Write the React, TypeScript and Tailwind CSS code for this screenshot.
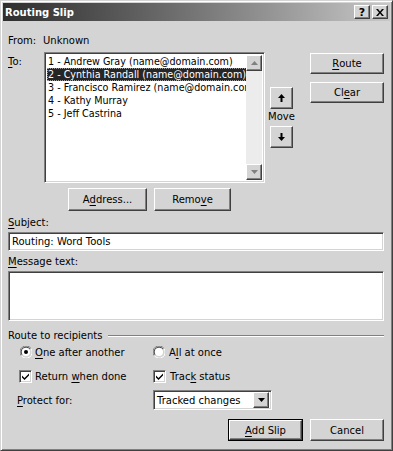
import React from "react";

const raised =
  "border border-t-white border-l-white border-r-[#404040] border-b-[#404040] shadow-[inset_-1px_-1px_0_#808080] bg-[#d4d4d4]";
const sunken =
  "border border-t-[#808080] border-l-[#808080] border-r-white border-b-white shadow-[inset_1px_1px_0_#404040,inset_-1px_-1px_0_#d4d4d4]";

const U = ({ children }: { children: React.ReactNode }) => (
  <span className="underline underline-offset-[2px]">{children}</span>
);

const Button = ({
  children,
  className = "",
  isDefault = false,
}: {
  children: React.ReactNode;
  className?: string;
  isDefault?: boolean;
}) => {
  if (isDefault) {
    return (
      <div className={`border border-black flex ${className}`}>
        <div className={`${raised} flex-1 flex items-center justify-center`}>{children}</div>
      </div>
    );
  }
  return <div className={`${raised} flex items-center justify-center ${className}`}>{children}</div>;
};

const Arrow = ({ up }: { up: boolean }) => (
  <svg width="7" height="8" viewBox="0 0 7 8" className={up ? "" : "rotate-180"}>
    <path d="M3.5 0 L7 4 L4.5 4 L4.5 8 L2.5 8 L2.5 4 L0 4 Z" fill="#000" />
  </svg>
);

const ScrollArrow = ({ up }: { up: boolean }) => (
  <div className={`${raised} w-[16px] h-[16px] flex items-center justify-center`}>
    <svg width="7" height="4" viewBox="0 0 7 4" className={up ? "" : "rotate-180"}>
      <path d="M3.5 0 L7 4 L0 4 Z" fill="#808080" />
    </svg>
  </div>
);

const Radio = ({ checked }: { checked: boolean }) => (
  <svg width="12" height="12" viewBox="0 0 12 12">
    <path d="M11 2.5 A5.5 5.5 0 0 0 1 9.5" stroke="#808080" fill="none" />
    <path d="M10 3.2 A4.5 4.5 0 0 0 2 8.8" stroke="#404040" fill="none" />
    <circle cx="6" cy="6" r="4" fill="#fff" />
    <path d="M1.5 9.8 A5.5 5.5 0 0 0 11 2.8" stroke="#fff" fill="none" />
    {checked && <circle cx="6" cy="6" r="2" fill="#000" />}
  </svg>
);

const Check = () => (
  <div className={`${sunken} w-[13px] h-[13px] bg-white flex items-center justify-center`}>
    <svg width="7" height="7" viewBox="0 0 7 7">
      <path d="M0 2.5 L2.5 5 L7 0.5 L7 2.5 L2.5 7 L0 4.5 Z" fill="#000" />
    </svg>
  </div>
);

const recipients = [
  "1 - Andrew Gray (name@domain.com)",
  "2 - Cynthia Randall (name@domain.com)",
  "3 - Francisco Ramirez (name@domain.com)",
  "4 - Kathy Murray",
  "5 - Jeff Castrina",
];

export default function App() {
  return (
    <div
      className="w-[393px] h-[451px] bg-[#d4d4d4] text-black text-[10px] leading-[13px] p-[2px] flex flex-col border border-t-[#d4d4d4] border-l-[#d4d4d4] border-r-[#404040] border-b-[#404040] shadow-[inset_1px_1px_0_#fff,inset_-1px_-1px_0_#808080] overflow-hidden"
      style={{ fontFamily: "'DejaVu Sans', sans-serif" }}
    >
      {/* title bar */}
      <div className="h-[18px] bg-linear-to-r from-[#2e2e2e] to-[#c8c8c8] flex items-center pl-[2px] pr-[2px]">
        <span className="text-white font-bold text-[10px] flex-1">Routing Slip</span>
        <div className={`${raised} w-[16px] h-[14px] flex items-center justify-center font-bold text-[11px] leading-none`}>?</div>
        <div className={`${raised} w-[16px] h-[14px] ml-[2px] flex items-center justify-center`}>
          <svg width="8" height="7" viewBox="0 0 8 7">
            <path d="M0 0 L2 0 L4 2.5 L6 0 L8 0 L5 3.5 L8 7 L6 7 L4 4.5 L2 7 L0 7 L3 3.5 Z" fill="#000" />
          </svg>
        </div>
      </div>

      <div className="flex flex-col pl-[5px] pr-[6px]">
        {/* from */}
        <div className="mt-[13px] flex">
          <span className="w-[35px]">From:</span>
          <span>Unknown</span>
        </div>

        {/* to + list + move + buttons */}
        <div className="mt-[5px] flex">
          <span className="w-[36px] pt-[3px]">
            <U>T</U>o:
          </span>
          <div className={`${sunken} bg-white w-[221px] h-[131px] p-[2px] flex`}>
            <div className="flex-1 flex flex-col overflow-hidden text-[9.6px]">
              {recipients.map((r, i) => (
                <div key={r} className="h-[13px] whitespace-nowrap">
                  <span
                    className={`inline-block h-[13px] pl-[1px] pr-[1px] ${
                      i === 1 ? "bg-[#262626] text-white outline outline-1 outline-dotted outline-[#999] -outline-offset-1" : ""
                    }`}
                  >
                    {r}
                  </span>
                </div>
              ))}
            </div>
            <div className="w-[16px] flex flex-col bg-[#ececec]">
              <ScrollArrow up />
              <div className="flex-1" />
              <ScrollArrow up={false} />
            </div>
          </div>
          <div className="ml-[5px] mt-[35px] w-[23px] flex flex-col items-center">
            <Button className="w-[23px] h-[22px]">
              <Arrow up />
            </Button>
            <span className="h-[16px] leading-[16px]">Move</span>
            <Button className="w-[23px] h-[22px] mt-[1px]">
              <Arrow up={false} />
            </Button>
          </div>
          <div className="ml-[17px] mt-[1px] flex flex-col">
            <Button className="w-[74px] h-[21px]">
              <U>R</U>oute
            </Button>
            <Button className="w-[74px] h-[21px] mt-[8px]">
              Cl<U>e</U>ar
            </Button>
          </div>
        </div>

        {/* address / remove */}
        <div className="mt-[5px] flex pl-[60px]">
          <Button className="w-[79px] h-[23px]">
            A<U>d</U>dress...
          </Button>
          <Button className="w-[77px] h-[23px] ml-[7px]">
            Remo<U>v</U>e
          </Button>
        </div>

        {/* subject */}
        <div className="mt-[5px]">
          <U>S</U>ubject:
        </div>
        <div className={`${sunken} bg-white mt-[3px] h-[19px] flex items-center pl-[3px]`}>Routing: Word Tools</div>

        {/* message */}
        <div className="mt-[4px]">
          <U>M</U>essage text:
        </div>
        <div className={`${sunken} bg-white mt-[3px] h-[50px]`} />

        {/* route to recipients */}
        <div className="mt-[8px] flex items-center">
          <span className="whitespace-nowrap">Route to recipients</span>
          <div className="flex-1 ml-[5px] mt-[1px] border-t border-t-[#808080] border-b border-b-white" />
        </div>

        <div className="mt-[2px] h-[16px] flex items-center pl-[12px]">
          <div className="w-[133px] flex items-center gap-[3px]">
            <Radio checked />
            <span>
              <U>O</U>ne after another
            </span>
          </div>
          <div className="flex items-center gap-[4px]">
            <Radio checked={false} />
            <span>
              A<U>l</U>l at once
            </span>
          </div>
        </div>

        <div className="mt-[8px] h-[16px] flex items-center pl-[11px]">
          <div className="w-[134px] flex items-center gap-[3px]">
            <Check />
            <span>
              Return <U>w</U>hen done
            </span>
          </div>
          <div className="flex items-center gap-[4px]">
            <Check />
            <span>
              Trac<U>k</U> status
            </span>
          </div>
        </div>

        <div className="mt-[6px] h-[20px] flex items-center pl-[9px]">
          <span className="w-[136px]">
            <U>P</U>rotect for:
          </span>
          <div className={`${sunken} bg-white w-[119px] h-[20px] flex items-center p-[2px]`}>
            <span className="flex-1 pl-[1px]">Tracked changes</span>
            <div className={`${raised} w-[16px] h-[16px] flex items-center justify-center`}>
              <svg width="7" height="4" viewBox="0 0 7 4">
                <path d="M0 0 L7 0 L3.5 4 Z" fill="#000" />
              </svg>
            </div>
          </div>
        </div>

        <div className="mt-[9px] flex justify-end">
          <Button isDefault className="w-[75px] h-[22px]">
            <U>A</U>dd Slip
          </Button>
          <Button className="w-[74px] h-[22px] ml-[7px]">Cancel</Button>
        </div>
      </div>
    </div>
  );
}
